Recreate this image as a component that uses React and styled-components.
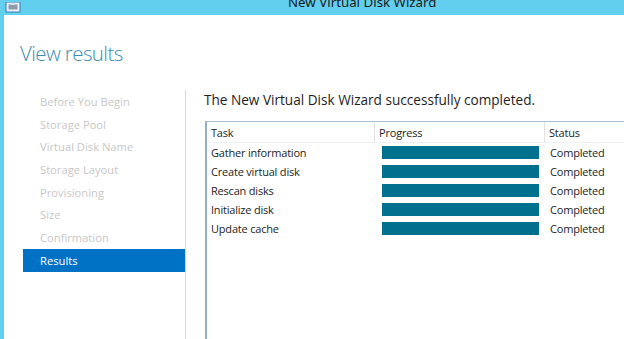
import React from "react";
import styled, { createGlobalStyle } from "styled-components";

const GlobalStyle = createGlobalStyle`
  html, body {
    margin: 0;
    padding: 0;
    width: 624px;
    height: 339px;
    overflow: hidden;
    background: #62cfee;
    font-family: "Open Sans", "Noto Sans", sans-serif;
  }
`;

const steps = [
  "Before You Begin",
  "Storage Pool",
  "Virtual Disk Name",
  "Storage Layout",
  "Provisioning",
  "Size",
  "Confirmation",
  "Results",
];

const tasks = [
  "Gather information",
  "Create virtual disk",
  "Rescan disks",
  "Initialize disk",
  "Update cache",
];

function WizardIcon() {
  return (
    <svg width="16" height="12" viewBox="0 0 16 12">
      <rect x="1" y="0" width="14" height="10" fill="#e9f3fa" stroke="#3d79b8" />
      <rect x="3.5" y="2.5" width="9" height="5" fill="#8d9aa7" />
      <rect x="6" y="1" width="4" height="2" fill="#d8e2ec" />
    </svg>
  );
}

export default function App() {
  return (
    <>
      <GlobalStyle />
      <Window>
        <TitleBar>
          <IconSlot>
            <WizardIcon />
          </IconSlot>
          <Caption>New Virtual Disk Wizard</Caption>
        </TitleBar>
        <Client>
          <PageTitle>View results</PageTitle>
          <Body>
            <Nav>
              {steps.map((s) => (
                <NavItem key={s} $active={s === "Results"}>
                  {s}
                </NavItem>
              ))}
            </Nav>
            <Content>
              <Heading>The New Virtual Disk Wizard successfully completed.</Heading>
              <Table>
                <HeaderRow>
                  <HeadCell>Task</HeadCell>
                  <HeadCell>Progress</HeadCell>
                  <HeadCell>Status</HeadCell>
                </HeaderRow>
                {tasks.map((t) => (
                  <Row key={t}>
                    <Cell>{t}</Cell>
                    <BarCell>
                      <Bar />
                    </BarCell>
                    <Cell $pad={5}>Completed</Cell>
                  </Row>
                ))}
              </Table>
            </Content>
          </Body>
        </Client>
      </Window>
    </>
  );
}

const Window = styled.div`
  display: flex;
  flex-direction: column;
  width: 624px;
  height: 339px;
  background: #62cfee;
`;

const TitleBar = styled.div`
  display: flex;
  align-items: flex-start;
  height: 15px;
  overflow: hidden;
  flex-shrink: 0;
`;

const IconSlot = styled.div`
  margin: -3px 0 0 5px;
  width: 16px;
  height: 12px;
`;

const Caption = styled.div`
  margin: -7px 0 0 267px;
  font-family: "Noto Sans", "Open Sans", sans-serif;
  font-size: 13.3px;
  line-height: 18px;
  color: #1a1a1a;
  white-space: nowrap;
`;

const Client = styled.div`
  flex: 1;
  margin-left: 4px;
  background: #ffffff;
  display: flex;
  flex-direction: column;
  overflow: hidden;
`;

const PageTitle = styled.h1`
  margin: 25px 0 0 16px;
  font-size: 20.5px;
  font-weight: 300;
  line-height: 26px;
  color: #3d8db2;
  letter-spacing: -0.6px;
`;

const Body = styled.div`
  display: flex;
  flex: 1;
  margin-top: 24px;
  min-height: 0;
`;

const Nav = styled.div`
  flex-shrink: 0;
  width: 162px;
  margin-left: 19px;
  border-right: 1px solid #d9d9d9;
  display: flex;
  flex-direction: column;
`;

const NavItem = styled.div`
  height: 22.7px;
  display: flex;
  align-items: center;
  padding-left: 17px;
  font-size: 11.2px;
  color: ${(p) => (p.$active ? "#ffffff" : "#c8c8c8")};
  background: ${(p) => (p.$active ? "#0072c6" : "transparent")};
  white-space: nowrap;
`;

const Content = styled.div`
  flex: 1;
  min-width: 0;
  padding-left: 19px;
  display: flex;
  flex-direction: column;
`;

const Heading = styled.div`
  font-size: 13.6px;
  line-height: 20px;
  color: #1e1e1e;
  margin-left: -1px;
  white-space: nowrap;
`;

const Table = styled.div`
  margin-top: 11px;
  width: 460px;
  flex: 1;
  border-top: 1px solid #a9bdd3;
  border-left: 2px solid #94afcd;
  background: #fff;
`;

const cols = "168px 170px 1fr";

const HeaderRow = styled.div`
  display: grid;
  grid-template-columns: ${cols};
  height: 20px;
  border-bottom: 1px solid #eceff3;
`;

const HeadCell = styled.div`
  display: flex;
  align-items: center;
  padding-left: 4px;
  font-size: 11px;
  letter-spacing: -0.2px;
  color: #1e1e1e;
  border-right: 1px solid #e1e1e1;
`;

const Row = styled.div`
  display: grid;
  grid-template-columns: ${cols};
  height: 19px;
  &:first-of-type {
    margin-top: 1px;
  }
`;

const Cell = styled.div`
  display: flex;
  align-items: center;
  padding-left: ${(p) => p.$pad ?? 4}px;
  font-size: 11px;
  letter-spacing: -0.2px;
  color: #1e1e1e;
  white-space: nowrap;
`;

const BarCell = styled.div`
  display: flex;
  align-items: center;
  padding-left: 7px;
`;

const Bar = styled.div`
  width: 157px;
  height: 13px;
  background: #00708f;
`;
